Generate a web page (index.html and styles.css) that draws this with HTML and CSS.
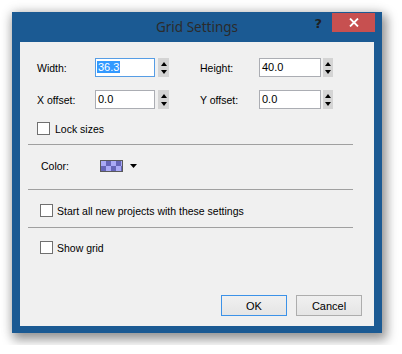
FILE: index.html
```html
<!DOCTYPE html>
<html lang="en">
<head>
    <meta charset="UTF-8">
    <title>Grid Settings</title>
    <link rel="stylesheet" href="styles.css">
</head>
<body>

    <!-- Dialog window -->
    <div class="window">
        <div class="titlebar">
            <div></div>
            <div class="title">Grid Settings</div>
            <div class="title-controls">
                <span class="help-btn">?</span>
                <span class="close-btn">
                    <svg width="10" height="9" viewBox="0 0 10 9"><path d="M1 0.5 L9 8.5 M9 0.5 L1 8.5" stroke="#fff" stroke-width="1.8"/></svg>
                </span>
            </div>
        </div>

        <div class="client">
            <!-- Size / offset fields -->
            <div class="fields">
                <div class="row">
                    <div class="field">
                        <label>Width:</label>
                        <div class="input focused"><span class="selected">36.3</span></div>
                        <div class="spin"><i class="up"></i><i class="down"></i></div>
                    </div>
                    <div class="field field-right">
                        <label>Height:</label>
                        <div class="input">40.0</div>
                        <div class="spin"><i class="up"></i><i class="down"></i></div>
                    </div>
                </div>
                <div class="row">
                    <div class="field">
                        <label>X offset:</label>
                        <div class="input">0.0</div>
                        <div class="spin"><i class="up"></i><i class="down"></i></div>
                    </div>
                    <div class="field field-right">
                        <label>Y offset:</label>
                        <div class="input">0.0</div>
                        <div class="spin"><i class="up"></i><i class="down"></i></div>
                    </div>
                </div>
            </div>

            <div class="checkrow lock-row"><span class="check"></span>Lock sizes</div>
            <div class="sep"></div>

            <div class="color-row">
                <span class="color-label">Color:</span>
                <span class="swatch"></span>
                <svg class="drop" width="7" height="4" viewBox="0 0 7 4"><polygon points="0,0 7,0 3.5,4" fill="#000"/></svg>
            </div>
            <div class="sep sep-2"></div>

            <div class="checkrow opt-row"><span class="check"></span>Start all new projects with these settings</div>
            <div class="sep sep-3"></div>

            <div class="checkrow opt-row grid-row"><span class="check"></span>Show grid</div>

            <div class="buttons">
                <button class="btn btn-default">OK</button>
                <button class="btn">Cancel</button>
            </div>
        </div>
    </div>

</body>
</html>
```
FILE: styles.css
```css
body {
    margin: 0;
    padding: 12px;
    background-color: #ffffff;
    font-family: 'Liberation Sans', Arial, sans-serif;
    font-size: 10.5px;
    color: #000;
}

/* --- Window frame --- */
.window {
    width: 370px;
    height: 321px;
    box-sizing: border-box;
    padding: 0 8px 7px 8px;
    background-color: #1b5a93;
    display: flex;
    flex-direction: column;
    box-shadow: 3px 5px 10px 2px rgba(0,0,0,0.36), 0 0 12px rgba(0,0,0,0.15);
}
.titlebar {
    height: 30px;
    display: grid;
    grid-template-columns: 1fr auto 1fr;
    align-items: start;
}
.title {
    font-family: 'Noto Sans', 'Open Sans', sans-serif;
    font-size: 13.5px;
    line-height: 30px;
    color: #2b2b2b;
}
.title-controls {
    display: flex;
    justify-content: flex-end;
    align-items: flex-start;
    margin-right: -1px;
}
.help-btn {
    font-family: 'DejaVu Sans', sans-serif;
    font-weight: bold;
    font-size: 13px;
    line-height: 14px;
    margin-top: 5px;
    margin-right: 10px;
    color: #1f1f1f;
}
.close-btn {
    width: 43px;
    height: 19px;
    margin-top: 1px;
    background-color: #c75050;
    display: flex;
    justify-content: center;
    align-items: center;
}

/* --- Client area --- */
.client {
    flex: 1;
    background-color: #f0f0f0;
    padding-top: 16px;
    display: flex;
    flex-direction: column;
}
.fields {
    padding-left: 17px;
    display: flex;
    flex-direction: column;
    gap: 13px;
}
.row { display: flex; height: 19px; }
.field { display: flex; align-items: center; }
.field label { width: 58px; }
.field-right { margin-left: 31px; }
.field-right label { width: 59px; }
.input {
    width: 60px;
    height: 19px;
    box-sizing: border-box;
    border: 1px solid #abadb3;
    background: #fff;
    padding-left: 2px;
    line-height: 17px;
    font-size: 11px;
}
.field-right .input { width: 62px; }
.input.focused { border-color: #569de5; }
.selected { background-color: #3399ff; color: #fff; padding: 0 1px; margin-left: -1px; }
.spin {
    width: 11px;
    height: 19px;
    margin-left: 3px;
    background-color: #d4d4d4;
    display: flex;
    flex-direction: column;
    justify-content: space-between;
    align-items: center;
    padding: 4px 0 3px 0;
    box-sizing: border-box;
}
.field-right .spin { margin-left: 2px; width: 10px; }
.spin i { width: 0; height: 0; border-left: 3px solid transparent; border-right: 3px solid transparent; }
.spin .up { border-bottom: 4px solid #000; }
.spin .down { border-top: 4px solid #000; }

.checkrow { display: flex; align-items: center; height: 13px; }
.check {
    width: 13px;
    height: 13px;
    box-sizing: border-box;
    border: 1px solid #707070;
    background: #fff;
    margin-right: 5px;
}
.lock-row { margin: 13px 0 0 17px; }
.opt-row { margin: 14px 0 0 20px; }
.opt-row .check { margin-right: 4px; }
.grid-row { margin-top: 13px; }

.sep {
    height: 1px;
    background-color: #a0a0a0;
    margin: 9px 21px 0 8px;
}
.sep-2 { margin-top: 17px; }
.sep-3 { margin-top: 10px; }

.color-row {
    display: flex;
    align-items: center;
    height: 12px;
    margin: 15px 0 0 21px;
}
.color-label { width: 59px; }
.swatch {
    width: 23px;
    height: 12px;
    box-sizing: border-box;
    border: 1px solid #5a5a5a;
    background: repeating-conic-gradient(#6666b8 0 25%, #aaaaf6 0 50%) 0 0 / 10px 10px;
}
.drop { margin-left: 7px; }

.buttons {
    margin-top: auto;
    display: flex;
    justify-content: flex-end;
    gap: 9px;
    padding: 0 12px 10px 0;
}
.btn {
    width: 66px;
    height: 21px;
    border: 1px solid #adadad;
    background: linear-gradient(#f0f0f0, #e5e5e5);
    font-family: 'Liberation Sans', Arial, sans-serif;
    font-size: 11px;
    color: #000;
    padding: 0;
}
.btn-default { border-color: #3c92e8; }
```
